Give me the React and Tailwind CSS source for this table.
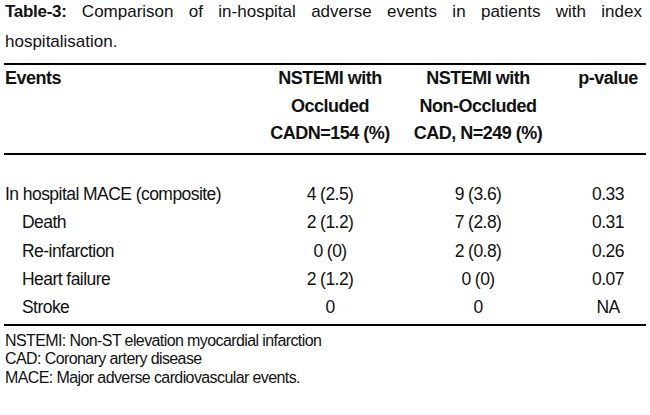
import React from "react";

const rows = [
  { label: "In hospital MACE (composite)", a: "4 (2.5)", b: "9 (3.6)", p: "0.33", sub: false },
  { label: "Death", a: "2 (1.2)", b: "7 (2.8)", p: "0.31", sub: true },
  { label: "Re-infarction", a: "0 (0)", b: "2 (0.8)", p: "0.26", sub: true },
  { label: "Heart failure", a: "2 (1.2)", b: "0 (0)", p: "0.07", sub: true },
  { label: "Stroke", a: "0", b: "0", p: "NA", sub: true },
];

export default function App() {
  return (
    <div
      className="w-[650px] h-[415px] bg-white text-[#111] px-[4px] overflow-hidden"
      style={{ fontFamily: '"Liberation Sans", Arial, sans-serif' }}
    >
      {/* caption */}
      <div className="text-[17px] leading-[30px] mt-[-3px] pl-[1px] pr-[4px]">
        <p className="text-justify [text-align-last:justify] whitespace-nowrap">
          <b className="tracking-[-0.3px]">Table-3:</b> Comparison of in-hospital adverse events in patients with index
        </p>
        <p>hospitalisation.</p>
      </div>

      {/* table */}
      <div className="mt-[6px] border-t-2 border-b-2 border-black">
        <div className="flex font-bold text-[18px] tracking-[-0.5px] leading-[27.5px] pb-[5px] border-b-2 border-black whitespace-nowrap">
          <div className="w-[264px] pl-[1px]">Events</div>
          <div className="w-[124px] text-center">
            NSTEMI with
            <br />
            Occluded
            <br />
            CADN=154 (%)
          </div>
          <div className="w-[172px] text-center">
            NSTEMI with
            <br />
            Non-Occluded
            <br />
            CAD, N=249 (%)
          </div>
          <div className="w-[78px] pl-[10px] text-center">p-value</div>
        </div>

        <div className="pt-[25.5px] pb-[2.5px] text-[17.5px] tracking-[-0.55px] leading-[28.3px] whitespace-nowrap">
          {rows.map((r) => (
            <div key={r.label} className="flex">
              <div className={`w-[264px] ${r.sub ? "pl-[18px]" : "pl-[1px]"}`}>{r.label}</div>
              <div className="w-[124px] text-center">{r.a}</div>
              <div className="w-[172px] text-center">{r.b}</div>
              <div className="w-[78px] pl-[10px] text-center">{r.p}</div>
            </div>
          ))}
        </div>
      </div>

      {/* footnotes */}
      <div className="pt-[6px] pl-[1px] text-[16px] tracking-[-0.6px] leading-[18.3px] whitespace-nowrap">
        <p>NSTEMI: Non-ST elevation myocardial infarction</p>
        <p>CAD: Coronary artery disease</p>
        <p>MACE: Major adverse cardiovascular events.</p>
      </div>
    </div>
  );
}
